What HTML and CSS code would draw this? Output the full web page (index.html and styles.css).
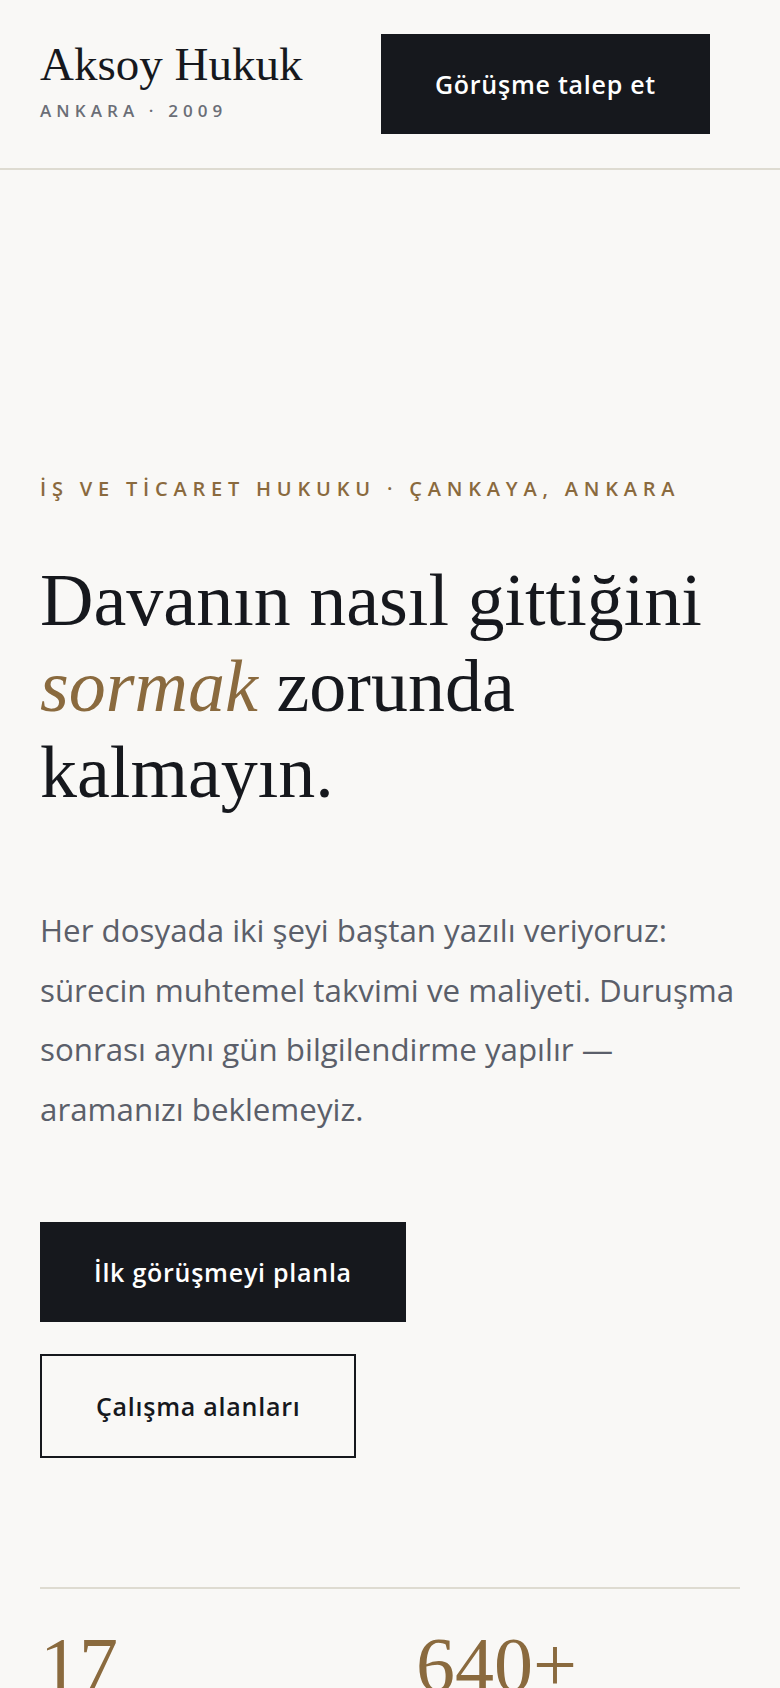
FILE: index.html
```html
<!DOCTYPE html>
<html lang="tr">
<head>
<meta charset="utf-8">
<title>Aksoy Hukuk</title>
<link rel="stylesheet" href="styles.css">
</head>
<body>
<header class="site-header">
  <div class="brand">
    <div class="brand-name">Aksoy Hukuk</div>
    <div class="brand-sub">ANKARA · 2009</div>
  </div>
  <a class="btn btn-dark" href="#">Görüşme talep et</a>
</header>
<main class="hero">
  <p class="eyebrow">İŞ VE TİCARET HUKUKU · ÇANKAYA, ANKARA</p>
  <h1 class="headline">Davanın nasıl gittiğini <em>sormak</em> zorunda kalmayın.</h1>
  <p class="lead">Her dosyada iki şeyi baştan yazılı veriyoruz: sürecin muhtemel takvimi ve maliyeti. Duruşma sonrası aynı gün bilgilendirme yapılır — aramanızı beklemeyiz.</p>
  <div class="actions">
    <a class="btn btn-dark" href="#">İlk görüşmeyi planla</a>
    <a class="btn btn-outline" href="#">Çalışma alanları</a>
  </div>
  <section class="stats">
    <div class="stat"><span class="stat-num">17</span></div>
    <div class="stat"><span class="stat-num">640+</span></div>
  </section>
</main>
</body>
</html>
```
FILE: styles.css
```css
* { box-sizing: border-box; }
html, body { margin: 0; padding: 0; }
body {
  background: #f9f8f6;
  color: #16181d;
  font-family: "Open Sans", "Lato", sans-serif;
  overflow-x: hidden;
}
.site-header {
  display: flex;
  align-items: flex-start;
  justify-content: space-between;
  padding: 34px 70px 34px 40px;
  border-bottom: 2px solid #dedbd1;
}
.brand { padding-top: 4px; }
.brand-name {
  font-family: "Liberation Serif", "Times New Roman", serif;
  font-size: 47px;
  line-height: 52px;
  color: #16181d;
}
.brand-sub {
  margin-top: 10px;
  font-size: 17px;
  line-height: 22px;
  font-weight: 600;
  letter-spacing: 0.3em;
  color: #6b6e76;
}
.btn {
  display: inline-block;
  padding: 36px 54px;
  font-size: 25px;
  line-height: 28px;
  font-weight: 600;
  letter-spacing: 0.03em;
  text-decoration: none;
  white-space: nowrap;
}
.btn-dark { background: #16181d; color: #ffffff; }
.btn-outline {
  background: transparent;
  color: #16181d;
  border: 2px solid #16181d;
}
.hero { padding: 305px 40px 0; }
.eyebrow {
  margin: 0;
  font-size: 20px;
  line-height: 28px;
  font-weight: 600;
  letter-spacing: 0.29em;
  color: #8a6a3e;
}
.headline {
  margin: 54px 0 0;
  font-family: "Liberation Serif", "Times New Roman", serif;
  font-weight: 400;
  font-size: 74px;
  line-height: 86px;
  color: #16181d;
}
.headline em { font-style: italic; color: #8a6a3e; }
.lead {
  margin: 86px 0 0;
  font-size: 31.3px;
  line-height: 59.5px;
  color: #5b5f6a;
}
.actions {
  margin-top: 83px;
  display: flex;
  flex-wrap: wrap;
  gap: 32px;
}
.stats {
  margin-top: 129px;
  border-top: 2px solid #dedbd1;
  padding-top: 37px;
  display: grid;
  grid-template-columns: 1fr 1fr;
  column-gap: 52px;
}
.stat-num {
  font-family: "Liberation Serif", "Times New Roman", serif;
  font-size: 78px;
  line-height: 78px;
  color: #8a6a3e;
}
```
